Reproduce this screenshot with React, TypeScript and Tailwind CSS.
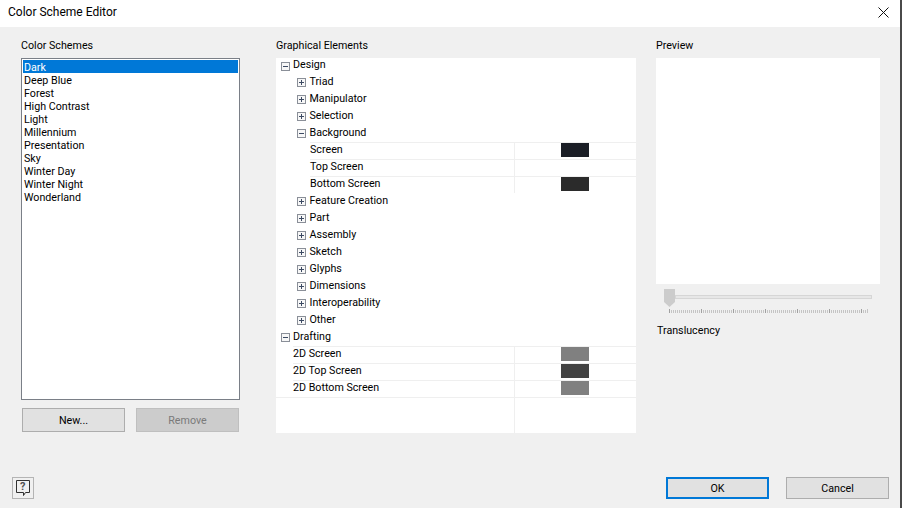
import React from "react";

const schemes = [
  "Dark",
  "Deep Blue",
  "Forest",
  "High Contrast",
  "Light",
  "Millennium",
  "Presentation",
  "Sky",
  "Winter Day",
  "Winter Night",
  "Wonderland",
];

// --- Tree expander box ---
const Expander = ({ open }: { open: boolean }) => (
  <svg width="9" height="9" viewBox="0 0 9 9" className="shrink-0">
    <rect x="0.5" y="0.5" width="8" height="8" fill="#f7f7f7" stroke="#8a8f98" />
    <path d="M2 4.5H7" stroke="#3c4a63" />
    {!open && <path d="M4.5 2V7" stroke="#3c4a63" />}
  </svg>
);

const Group = ({ label, open = false, top = false, indent = false }: any) => (
  <div
    className={`flex items-center ${top ? "h-[16px]" : "h-[17px]"} ${
      indent ? "pl-[21px]" : "pl-[5px]"
    }`}
  >
    <Expander open={open} />
    <span className={`${indent ? "ml-[3.5px]" : "ml-[3px]"} leading-none ${top ? "-mt-[2px]" : ""}`}>
      {label}
    </span>
  </div>
);

const Leaf = ({ label, color, indent = false }: any) => (
  <div className={`flex h-[17px] ${indent ? "pl-[34px]" : "pl-[17px]"}`}>
    <div className="flex flex-1 border-t border-[#efefef]">
      <div
        className={`flex items-center border-r border-[#efefef] ${
          indent ? "w-[205px]" : "w-[222px]"
        }`}
      >
        <span className="-mt-[2px] leading-none">{label}</span>
      </div>
      <div className="flex flex-1 justify-center">
        {color && <div className="mr-px h-[14px] w-[28px]" style={{ background: color }} />}
      </div>
    </div>
  </div>
);

const Button = ({ label, disabled = false, primary = false, className = "" }: any) => (
  <button
    className={`w-[103px] ${
      primary
        ? "border-2 border-[#0078d7] bg-[#e1e1e1]"
        : disabled
          ? "border border-[#bfbfbf] bg-[#cccccc] text-[#7a7a7a]"
          : "border border-[#adadad] bg-[#e1e1e1]"
    } ${className}`}
  >
    {label}
  </button>
);

const HelpButton = () => (
  <button className="relative flex h-[22px] w-[22px] items-center justify-center border border-[#b4b4b4]">
    <svg width="16" height="17" viewBox="0 0 16 17">
      <path d="M1.5 0.5H14.5V12.5H10.5L8.5 15.5V12.5H1.5Z" fill="#f0f0f0" stroke="#303030" />
    </svg>
    <span className="absolute left-[7px] top-[2px] text-[11px] font-bold leading-[13px] text-[#505050]">
      ?
    </span>
  </button>
);

// --- Translucency slider ---
const Slider = () => {
  const ticks = Array.from({ length: 100 }, (_, i) => i * 2);
  return (
    <div className="ml-[8px] mt-[5px] w-[208px]">
      <div className="flex h-[18px]">
        <svg width="11" height="18" viewBox="0 0 11 18" className="shrink-0">
          <path d="M0 0H11V13L5.5 18L0 13Z" fill="#cccccc" />
        </svg>
        <div className="mt-[6px] h-[4px] flex-1 border border-[#d6d6d6] bg-[#e7e7e7]" />
      </div>
      <svg width="200" height="5" viewBox="0 0 200 5" className="ml-[5px] mt-[2px] block">
        {ticks.map((x) => (
          <line
            key={x}
            x1={x + 0.5}
            x2={x + 0.5}
            y1={x % 32 === 0 || x === 198 ? 0 : 1}
            y2="4"
            stroke={x % 32 === 0 ? "#a0a0a0" : "#c4c4c4"}
          />
        ))}
      </svg>
    </div>
  );
};

export default function App() {
  return (
    <div className="flex h-[508px] w-[902px] overflow-hidden font-['Roboto','Liberation_Sans',sans-serif] text-[10.7px] text-black">
      <div className="flex w-[900px] flex-col bg-[#f0f0f0]">
        {/* title bar */}
        <div className="flex h-[27px] items-center justify-between bg-white pl-[8px] pr-[11px]">
          <span className="-mt-[3px] text-[12px]">Color Scheme Editor</span>
          <svg width="11" height="11" viewBox="0 0 11 11" className="-mt-[3px]">
            <path d="M0.5 0.5L10.5 10.5M10.5 0.5L0.5 10.5" stroke="#111" fill="none" />
          </svg>
        </div>

        <div className="flex flex-1 pt-[10px]">
          {/* schemes column */}
          <div className="ml-[21px] flex w-[219px] flex-col">
            <div className="h-[21px] leading-[18px]">Color Schemes</div>
            <div className="h-[342px] border border-[#7a7f87] bg-white p-px">
              {schemes.map((s, i) => (
                <div
                  key={s}
                  className={`h-[13px] pl-[1px] pt-[2px] leading-[11px] ${
                    i === 0 ? "bg-[#0078d7] text-white" : ""
                  }`}
                >
                  {s}
                </div>
              ))}
            </div>
            <div className="ml-px mt-[8px] flex gap-[11px]">
              <Button label="New..." className="h-[24px] pt-[3px]" />
              <Button label="Remove" disabled className="h-[24px] pt-[3px]" />
            </div>
          </div>

          {/* graphical elements column */}
          <div className="ml-[36px] flex w-[360px] flex-col">
            <div className="h-[21px] leading-[18px]">Graphical Elements</div>
            <div className="flex h-[375px] flex-col bg-white">
              <Group label="Design" open top />
              <Group label="Triad" indent />
              <Group label="Manipulator" indent />
              <Group label="Selection" indent />
              <Group label="Background" open indent />
              <Leaf label="Screen" color="#1b1e26" indent />
              <Leaf label="Top Screen" indent />
              <Leaf label="Bottom Screen" color="#2b2b2b" indent />
              <Group label="Feature Creation" indent />
              <Group label="Part" indent />
              <Group label="Assembly" indent />
              <Group label="Sketch" indent />
              <Group label="Glyphs" indent />
              <Group label="Dimensions" indent />
              <Group label="Interoperability" indent />
              <Group label="Other" indent />
              <Group label="Drafting" open />
              <Leaf label="2D Screen" color="#808080" />
              <Leaf label="2D Top Screen" color="#434343" />
              <Leaf label="2D Bottom Screen" color="#808080" />
              <div className="flex flex-1 border-t border-[#efefef]">
                <div className="w-[239px] border-r border-[#efefef]" />
              </div>
            </div>
          </div>

          {/* preview column */}
          <div className="ml-[20px] flex w-[224px] flex-col">
            <div className="h-[21px] leading-[18px]">Preview</div>
            <div className="h-[226px] bg-white" />
            <Slider />
            <div className="ml-px mt-[9px]">Translucency</div>
          </div>
        </div>

        {/* footer */}
        <div className="flex h-[31px] items-start pl-[12px] pr-[11px]">
          <HelpButton />
          <Button label="OK" primary className="ml-auto h-[22px] pt-[2px]" />
          <Button label="Cancel" className="ml-[17px] h-[22px] pt-[3px]" />
        </div>
      </div>
      <div className="w-[2px] bg-[#4a4a4a]" />
    </div>
  );
}
